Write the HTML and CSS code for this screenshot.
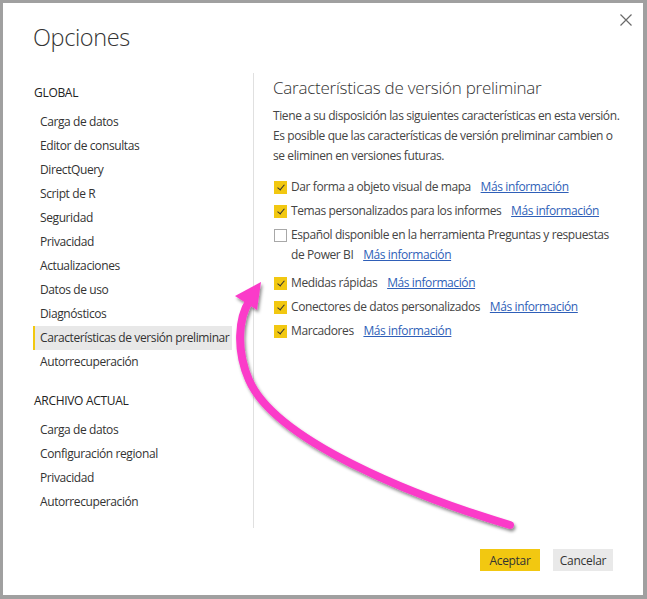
FILE: index.html
```html
<!DOCTYPE html>
<html lang="es">
<head>
<meta charset="utf-8">
<title>Opciones</title>
<link rel="stylesheet" href="styles.css">
</head>
<body>
<div class="dialog">
  <button class="close" aria-label="Cerrar">
    <svg width="12" height="12" viewBox="0 0 12 12"><path d="M0.5 0.5 L11.5 11.5 M11.5 0.5 L0.5 11.5" stroke="#6a6a6a" stroke-width="1.2" fill="none"/></svg>
  </button>
  <header class="header"><h1 class="title">Opciones</h1></header>
  <div class="main">
    <nav class="sidebar">
      <div class="section">GLOBAL</div>
      <ul class="nav">
        <li class="item">Carga de datos</li>
        <li class="item">Editor de consultas</li>
        <li class="item">DirectQuery</li>
        <li class="item">Script de R</li>
        <li class="item">Seguridad</li>
        <li class="item">Privacidad</li>
        <li class="item">Actualizaciones</li>
        <li class="item">Datos de uso</li>
        <li class="item">Diagnósticos</li>
        <li class="item selected">Características de versión preliminar</li>
        <li class="item">Autorrecuperación</li>
      </ul>
      <div class="section section-2">ARCHIVO ACTUAL</div>
      <ul class="nav">
        <li class="item">Carga de datos</li>
        <li class="item">Configuración regional</li>
        <li class="item">Privacidad</li>
        <li class="item">Autorrecuperación</li>
      </ul>
    </nav>
    <section class="content">
      <h2 class="heading">Características de versión preliminar</h2>
      <p class="desc">Tiene a su disposición las siguientes características en esta versión. Es posible que las características de versión preliminar cambien o se eliminen en versiones futuras.</p>
      <div class="options">
        <div class="opt"><span class="cb checked"></span><span class="label">Dar forma a objeto visual de mapa <a class="link">Más información</a></span></div>
        <div class="opt"><span class="cb checked"></span><span class="label">Temas personalizados para los informes <a class="link">Más información</a></span></div>
        <div class="opt"><span class="cb"></span><span class="label">Español disponible en la herramienta Preguntas y respuestas de Power BI <a class="link">Más información</a></span></div>
        <div class="opt opt-after"><span class="cb checked"></span><span class="label">Medidas rápidas <a class="link">Más información</a></span></div>
        <div class="opt"><span class="cb checked"></span><span class="label">Conectores de datos personalizados <a class="link">Más información</a></span></div>
        <div class="opt"><span class="cb checked"></span><span class="label">Marcadores <a class="link">Más información</a></span></div>
      </div>
    </section>
  </div>
  <footer class="footer">
    <button class="btn primary">Aceptar</button>
    <button class="btn secondary">Cancelar</button>
  </footer>
</div>
<svg class="arrow" width="647" height="599" viewBox="0 0 647 599">
  <defs>
    <filter id="sh" x="-10%" y="-10%" width="120%" height="120%">
      <feDropShadow dx="1.5" dy="2.5" stdDeviation="1.5" flood-color="#000" flood-opacity="0.45"/>
    </filter>
  </defs>
  <g filter="url(#sh)">
    <path d="M510 525 C 410 495, 275 440, 249 380 C 236 350, 238 318, 250 300" fill="none" stroke="#fb3bc9" stroke-width="8" stroke-linecap="round"/>
    <polygon points="261,282 235,296 257,310" fill="#fb3bc9"/>
  </g>
</svg>
</body>
</html>
```
FILE: styles.css
```css
* { box-sizing: border-box; }
html, body { margin: 0; padding: 0; }
body {
  background: #a0a0a0;
  width: 647px;
  height: 599px;
  overflow: hidden;
  font-family: "Open Sans", "Noto Sans", sans-serif;
  color: #333;
  position: relative;
}
.dialog {
  position: relative;
  margin: 3px 4px 0 3px;
  width: 640px;
  height: 592px;
  background: #fff;
  display: flex;
  flex-direction: column;
}
.close {
  position: absolute;
  top: 11px;
  right: 11px;
  width: 12px;
  height: 12px;
  padding: 0;
  border: 0;
  background: none;
  display: flex;
}
.header { padding: 18px 0 0 30px; height: 70px; }
.title {
  margin: 0;
  font-size: 23.5px;
  line-height: 32px;
  font-weight: 300;
  letter-spacing: -0.4px;
  color: #333;
}
.main { display: flex; height: 455px; }
.sidebar { width: 250px; padding: 8px 0 0 30px; }
.section {
  font-size: 12px;
  line-height: 24px;
  height: 24px;
  color: #222;
  padding-left: 1px;
  letter-spacing: -0.3px;
  margin-bottom: 5px;
}
.section-2 { margin-top: 15px; }
.nav { list-style: none; margin: 0; padding: 0; }
.item {
  width: 199px;
  height: 24px;
  line-height: 24px;
  font-size: 12px;
  letter-spacing: -0.4px;
  padding-left: 5px;
  border-left: 2px solid transparent;
  color: #333;
  white-space: nowrap;
}
.item.selected { background: #e8e8e8; border-left-color: #f2c811; }
.content {
  flex: 1;
  border-left: 1px solid #e0e0e0;
  padding: 3px 21px 0 19px;
}
.heading {
  margin: 0;
  font-size: 17px;
  line-height: 24px;
  font-weight: 300;
  letter-spacing: -0.25px;
  color: #333;
}
.desc {
  margin: 6px 0 0;
  font-size: 12px;
  line-height: 20px;
  letter-spacing: -0.4px;
  color: #444;
}
.options { margin-top: 9px; display: flex; flex-direction: column; }
.opt { display: flex; align-items: flex-start; padding: 2px 0; font-size: 12px; line-height: 20px; letter-spacing: -0.4px; color: #444; }
.opt-after { margin-top: 4px; }
.cb {
  flex: none;
  width: 13px;
  height: 13px;
  margin: 4px 4px 0 1px;
  border: 1px solid #a8a8a8;
  background: #fff;
  position: relative;
}
.cb.checked { background: #f2c811; border-color: #f2c811; }
.cb.checked::after {
  content: "";
  position: absolute;
  left: 3.5px;
  top: 1px;
  width: 3px;
  height: 6px;
  border: solid #333;
  border-width: 0 1.6px 1.6px 0;
  transform: rotate(40deg);
}
.label { flex: 1; }
.link { color: #2f5fb8; text-decoration: underline; margin-left: 7px; }
.footer {
  display: flex;
  justify-content: flex-end;
  gap: 13px;
  padding: 21px 30px 0 0;
}
.btn {
  width: 60px;
  height: 22px;
  border: 0;
  padding: 0;
  font-family: "Open Sans", "Noto Sans", sans-serif;
  font-size: 12px;
  letter-spacing: -0.3px;
  color: #333;
}
.primary { background: #f2c811; }
.secondary { background: #e9e9e9; }
.arrow { position: absolute; left: 0; top: 0; pointer-events: none; }
```
